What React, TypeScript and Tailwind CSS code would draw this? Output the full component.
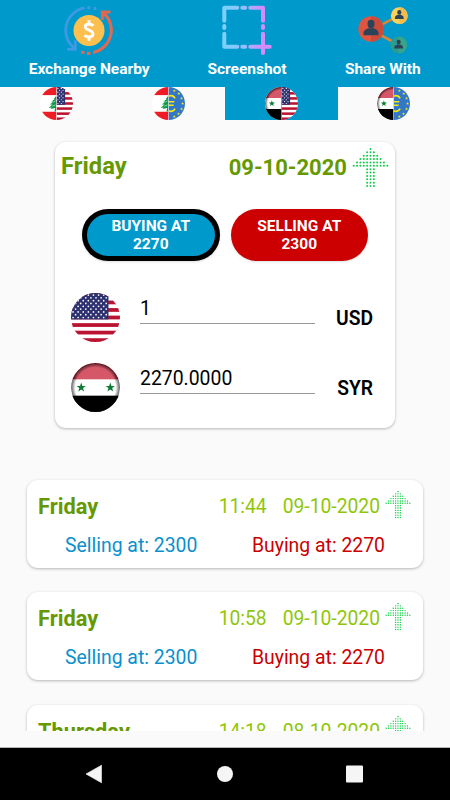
import type { ReactNode } from 'react';

type FlagCode = 'us' | 'sy' | 'lb' | 'eu';

interface HistoryEntry {
  day: string;
  time: string;
  date: string;
  selling: number;
  buying: number;
}

const TABS: { left: FlagCode; right: FlagCode }[] = [
  { left: 'lb', right: 'us' },
  { left: 'lb', right: 'eu' },
  { left: 'sy', right: 'us' },
  { left: 'sy', right: 'eu' },
];

const HISTORY: HistoryEntry[] = [
  { day: 'Friday', time: '11:44', date: '09-10-2020', selling: 2300, buying: 2270 },
  { day: 'Friday', time: '10:58', date: '09-10-2020', selling: 2300, buying: 2270 },
  { day: 'Thursday', time: '14:18', date: '08-10-2020', selling: 2300, buying: 2270 },
];

// dots per row, top to bottom
const ARROW_ROWS = [1, 3, 5, 7, 9, 11, 3, 3, 3, 3, 3, 3];

export default function App() {
  return (
    <div className="flex h-[800px] w-[450px] flex-col overflow-hidden bg-[#fafafa] font-[Roboto,sans-serif]">
      {/* Header */}
      <header className="flex h-[87px] shrink-0 justify-around bg-[#0099cc] pt-[5px]">
        <HeaderAction label="Exchange Nearby" width="w-[121px]"><ExchangeIcon /></HeaderAction>
        <HeaderAction label="Screenshot" width="w-[80px]"><ScreenshotIcon /></HeaderAction>
        <HeaderAction label="Share With" width="w-[77px]"><ShareIcon /></HeaderAction>
      </header>

      {/* Currency tabs */}
      <nav className="grid h-[33px] shrink-0 grid-cols-4">
        {TABS.map((tab, i) => (
          <button key={i} type="button" className={`flex justify-center ${i === 2 ? 'bg-[#0099cc]' : ''}`}>
            <PairFlag id={`pair-${i}`} left={tab.left} right={tab.right} />
          </button>
        ))}
      </nav>

      {/* Converter */}
      <section className="mx-[55px] mt-[22px] h-[286px] shrink-0 rounded-[11px] bg-white shadow-[0_1px_3px_rgba(0,0,0,0.28)]">
        <div className="flex h-[50px] items-center pl-[6px] pr-[6px] font-bold text-[#669900]">
          <span className="text-[23.8px]">Friday</span>
          <span className="ml-auto mr-[5px] text-[22px]">09-10-2020</span>
          <DotArrow className="mt-px h-[41px] w-[37px]" />
        </div>

        <div className="mt-[17px] flex gap-[11px] pl-[27px] text-center text-[15.5px] font-bold leading-[18px] text-white">
          <button type="button" className="h-[52px] w-[137.5px] rounded-full border-5 border-black bg-[#0099cc] shadow-sm">
            BUYING AT<br />2270
          </button>
          <button type="button" className="h-[52px] w-[137.5px] rounded-full bg-[#cc0000] shadow-sm">
            SELLING AT<br />2300
          </button>
        </div>

        <div className="mt-[32px] flex flex-col gap-[22px] pl-[16px]">
          <AmountRow flag="us" value="1" currency="USD" />
          <AmountRow flag="sy" value="2270.0000" currency="SYR" />
        </div>
      </section>

      {/* History */}
      <section className="mt-[39.5px] flex h-[263.5px] shrink-0 flex-col gap-[24.5px] overflow-hidden px-[27px] pt-[12px]">
        {HISTORY.map((entry) => (
          <HistoryCard key={entry.time} entry={entry} />
        ))}
      </section>

      {/* System navigation bar */}
      <footer className="mt-auto flex h-[53px] shrink-0 items-center justify-center border-t border-[#b5b8b8] bg-black">
        <svg width="280" height="20" viewBox="0 0 280 20" fill="#f5f5f5">
          <path d="M1 10 16.5 1.2V18.8Z" stroke="#f5f5f5" strokeWidth="0.6" strokeLinejoin="round" />
          <circle cx="140" cy="10" r="8" />
          <rect x="261" y="1.5" width="17" height="17" rx="1" />
        </svg>
      </footer>
    </div>
  );
}

function HeaderAction({ label, width, children }: { label: string; width: string; children: ReactNode }) {
  return (
    <button type="button" className={`flex flex-col items-center ${width}`}>
      {children}
      <span className="mt-[4px] whitespace-nowrap text-[15.5px] font-bold leading-[20px] text-white">{label}</span>
    </button>
  );
}

function AmountRow({ flag, value, currency }: { flag: FlagCode; value: string; currency: string }) {
  return (
    <div className="flex h-[48px] items-start">
      <RoundFlag id={`round-${flag}`} code={flag} />
      <div className="ml-[20px] h-[31px] w-[175px] border-b-[1.5px] border-[#999] text-[19.4px] leading-[31px] text-black">
        {value}
      </div>
      <span className="ml-auto mr-[22px] mt-[15px] text-[19.3px] font-semibold leading-[22px] text-black">{currency}</span>
    </div>
  );
}

function HistoryCard({ entry }: { entry: HistoryEntry }) {
  return (
    <article className="h-[88px] shrink-0 rounded-[11px] bg-white shadow-[0_1px_3px_rgba(0,0,0,0.28)]">
      <div className="flex h-[55px] items-center pl-[11px] pr-[12px] text-[19.3px] text-[#8fc60a]">
        <span className="text-[21.8px] font-bold text-[#669900]">{entry.day}</span>
        <span className="ml-auto">{entry.time}</span>
        <span className="ml-[16px] mr-[5px]">{entry.date}</span>
        <DotArrow className="-mt-[6px] h-[29px] w-[26px]" />
      </div>
      <div className="flex justify-between pl-[38px] pr-[38px] text-[19.4px] leading-[22px]">
        <span className="text-[#0a90cd]">Selling at: {entry.selling}</span>
        <span className="text-[#cc0000]">Buying at: {entry.buying}</span>
      </div>
    </article>
  );
}

function DotArrow({ className }: { className: string }) {
  return (
    <svg className={className} viewBox="0 0 110 120" fill="#0fce45">
      {ARROW_ROWS.map((count, row) =>
        Array.from({ length: count }, (_, i) => (
          <circle key={`${row}-${i}`} cx={55 + (i - (count - 1) / 2) * 10} cy={5 + row * 10} r="3" />
        ))
      )}
    </svg>
  );
}

/* Flags: drawn on a 48x48 canvas and clipped to a circle */

function Star({ x, y, r, fill }: { x: number; y: number; r: number; fill: string }) {
  const points = Array.from({ length: 10 }, (_, i) => {
    const radius = i % 2 === 0 ? r : r * 0.4;
    const angle = (Math.PI / 5) * i - Math.PI / 2;
    return `${(x + radius * Math.cos(angle)).toFixed(2)},${(y + radius * Math.sin(angle)).toFixed(2)}`;
  }).join(' ');
  return <polygon points={points} fill={fill} />;
}

function UsFlag({ from, canton }: { from: number; canton: number }) {
  const stripe = 48 / 13;
  return (
    <g>
      <rect width="48" height="48" fill="#fff" />
      {[0, 2, 4, 6, 8, 10, 12].map((n) => (
        <rect key={n} y={n * stripe} width="48" height={stripe} fill="#bb1430" />
      ))}
      <rect x={from} width={canton - from} height={stripe * 7} fill="#2e3170" />
      {Array.from({ length: 9 }, (_, row) =>
        Array.from({ length: 8 }, (_, col) => {
          const x = from + 2 + col * 5 + (row % 2) * 2.5;
          return x < canton - 1 ? <circle key={`${row}-${col}`} cx={x} cy={2 + row * 2.75} r="0.85" fill="#fff" /> : null;
        })
      )}
    </g>
  );
}

function SyrianFlag({ id }: { id: string }) {
  return (
    <g>
      <defs>
        <radialGradient id={`${id}-shade`}>
          <stop offset="0.82" stopColor="#000" stopOpacity="0" />
          <stop offset="1" stopColor="#000" stopOpacity="0.65" />
        </radialGradient>
      </defs>
      <rect width="48" height="48" fill="#fff" />
      <rect width="48" height="16" fill="#d03c4e" />
      <ellipse cx="24" cy="14" rx="19" ry="13" fill="#fff" fillOpacity="0.14" />
      <Star x={10} y={24} r={4.8} fill="#0b7a35" />
      <Star x={38.5} y={24} r={4.8} fill="#0b7a35" />
      <circle cx="24" cy="24" r="24" fill={`url(#${id}-shade)`} />
      <rect y="32" width="48" height="16" fill="#000" />
    </g>
  );
}

function LebaneseFlag() {
  return (
    <g>
      <rect width="48" height="48" fill="#fff" />
      <rect width="48" height="11.8" fill="#ee1c25" />
      <rect y="36" width="48" height="12" fill="#ee1c25" />
      <path
        d="M24 12L21.500 15.500 20 17 21.500 17.500 16.500 21 19.500 21.200 14.500 25.500 18 25.300 12.500 30.500 17 29.800 15.500 32 22 30.500 21 35.500H24Z"
        fill="#0c9b48"
      />
      <path d="M22.500 20 19.500 22M22.500 26 17.500 28" stroke="#fff" strokeWidth="0.8" />
    </g>
  );
}

function EuroFlag() {
  const stars = [
    [32.5, 5.5], [39, 9.5], [43, 16.5], [44.5, 24], [43, 32], [38.5, 39], [32.5, 43],
  ];
  return (
    <g>
      <rect width="48" height="48" fill="#3277c8" />
      {stars.map(([x, y]) => (
        <Star key={`${x}-${y}`} x={x} y={y} r={2.4} fill="#f1e51c" />
      ))}
      <path
        d="M33.500 16.500C31.500 12.500 27 11.800 22 14M33.500 31.500C31.500 35.500 27 36.200 22 34M18 21.500H32.500M18 26.500H31.500"
        stroke="#f6ea14"
        strokeWidth="2.4"
        fill="none"
      />
    </g>
  );
}

function FlagArt({ code, id, half = false }: { code: FlagCode; id: string; half?: boolean }) {
  switch (code) {
    case 'us':
      return half ? <UsFlag from={24} canton={36.5} /> : <UsFlag from={0} canton={36.7} />;
    case 'sy':
      return <SyrianFlag id={id} />;
    case 'lb':
      return <LebaneseFlag />;
    case 'eu':
      return <EuroFlag />;
  }
}

function RoundFlag({ id, code }: { id: string; code: FlagCode }) {
  return (
    <svg className="size-[49px] shrink-0" viewBox="0 0 48 48">
      <clipPath id={id}>
        <circle cx="24" cy="24" r="24" />
      </clipPath>
      <g clipPath={`url(#${id})`}>
        <FlagArt code={code} id={id} />
      </g>
    </svg>
  );
}

function PairFlag({ id, left, right }: { id: string; left: FlagCode; right: FlagCode }) {
  return (
    <svg className="size-[33px]" viewBox="0 0 48 48">
      <clipPath id={`${id}-left`}>
        <path d="M24 0A24 24 0 0 0 24 48Z" />
      </clipPath>
      <clipPath id={`${id}-right`}>
        <path d="M24 0A24 24 0 0 1 24 48Z" />
      </clipPath>
      <g clipPath={`url(#${id}-left)`}>
        <FlagArt code={left} id={id} half />
      </g>
      <g clipPath={`url(#${id}-right)`}>
        <FlagArt code={right} id={id} half />
      </g>
    </svg>
  );
}

/* Header icons */

function ExchangeIcon() {
  return (
    <svg className="size-[50px] shrink-0" viewBox="0 0 50 50" fill="none">
      <g stroke="#3d9ae2" strokeWidth="2.8">
        <path d="M20.500 2.900A22.800 22.800 0 0 0 10.500 43.300" />
        <path d="M3.200 44.300H11.300V35.200" />
      </g>
      <rect x="23.300" y="1.200" width="3" height="3" fill="#3d9ae2" />
      <rect x="29.500" y="2" width="3" height="3" fill="#3d9ae2" />
      <g stroke="#e2694f" strokeWidth="3">
        <path d="M29.200 47.500A22.800 22.800 0 0 0 39.500 8" />
        <path d="M38.300 15V7H46.500" />
      </g>
      <rect x="23" y="46.800" width="3.500" height="3.200" fill="#e2694f" />
      <rect x="17" y="45.800" width="3.500" height="3" fill="#e2694f" />
      <circle cx="25" cy="25.500" r="15.500" fill="#fdc04e" />
      <path
        d="M29.300 20.800C27.500 18.700 21.200 18.500 21.200 21.800C21.200 25.600 29 24.600 29 28.900C29 32.600 22.500 32.500 20.500 30.300M25 15.200V19M25 31.500V35.800"
        stroke="#fff"
        strokeWidth="2.900"
      />
    </svg>
  );
}

function ScreenshotIcon() {
  return (
    <svg className="size-[50px] shrink-0" viewBox="0 0 50 50" fill="none">
      <defs>
        <linearGradient id="capture" gradientUnits="userSpaceOnUse" x1="0" y1="0" x2="50" y2="0">
          <stop offset="0.1" stopColor="#7cd0fc" />
          <stop offset="0.45" stopColor="#98bdfb" />
          <stop offset="0.8" stopColor="#d68bfb" />
        </linearGradient>
      </defs>
      <path
        d="M15.300 2.700H2.300V15.700M28.300 2.700H41V15.700M2.300 28.700V41.700H15.300M28.300 41.700H47.700M41 28.700V48M20.300 2.710 23.200 2.700M20.300 41.710 23.200 41.700M2.310 21 2.300 23M41.010 21 41 23"
        stroke="url(#capture)"
        strokeWidth="4"
        strokeLinecap="round"
        strokeLinejoin="round"
      />
    </svg>
  );
}

function Person({ x, y, scale }: { x: number; y: number; scale: number }) {
  return (
    <g transform={`translate(${x} ${y}) scale(${scale})`} fill="#2c4258">
      <ellipse cx="0" cy="-5" rx="3.500" ry="4.200" />
      <path d="M-7.500 6.200V4C-7.500 1-4.500 0-2.500-.8H2.500C4.500 0 7.500 1 7.500 4V6.200Z" />
    </g>
  );
}

function ShareIcon() {
  return (
    <svg className="size-[50px] shrink-0" viewBox="0 0 50 50">
      <path d="M41 10.700 13 25 41 40" stroke="#d3873d" strokeWidth="2.600" fill="none" />
      <circle cx="13" cy="24" r="12.700" fill="#df5540" />
      <path d="M13 11.300a12.700 12.700 0 0 1 0 25.400Z" fill="#cb4b3a" />
      <circle cx="41.300" cy="10.700" r="8.400" fill="#fdd05a" />
      <path d="M41.300 2.300a8.400 8.400 0 0 1 0 16.800Z" fill="#f3bd4e" />
      <circle cx="40.700" cy="40" r="8.400" fill="#2c9b90" />
      <path d="M40.700 31.600a8.400 8.400 0 0 1 0 16.800Z" fill="#38a48a" />
      <Person x={13} y={24} scale={1} />
      <Person x={41.3} y={10.3} scale={0.58} />
      <Person x={40.7} y={40} scale={0.58} />
    </svg>
  );
}
